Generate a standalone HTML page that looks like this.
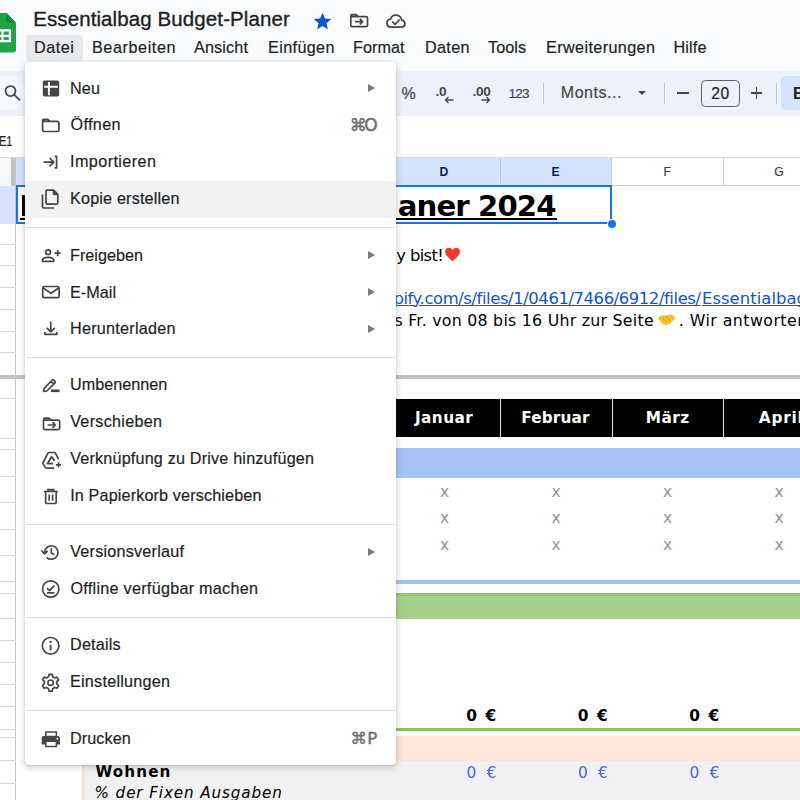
<!DOCTYPE html>
<html lang="de">
<head>
<meta charset="utf-8">
<title>Essentialbag Budget-Planer</title>
<style>
html,body{margin:0;padding:0;}
body{width:800px;height:800px;overflow:hidden;position:relative;background:#fff;font-family:"Liberation Sans",sans-serif;color:#1f1f1f;}
.a{position:absolute;}
.t{position:absolute;white-space:nowrap;line-height:1;color:#1f1f1f;}
.u{-webkit-text-stroke:.2px currentColor;}
.u2{-webkit-text-stroke:.35px currentColor;}
#hdr{left:0;top:0;width:800px;height:157px;background:#f9fbfd;}
#datei-bg{left:25.5px;top:35.25px;width:57px;height:25.5px;background:#e7e9ec;border-radius:3.5px;}
#tb{left:-30px;top:71.250px;width:900px;height:45px;background:#edf2fa;border-radius:22.500px;}
.sep{position:absolute;width:1px;height:21.500px;top:82.500px;background:#c7c7c7;}
#fbar{left:0;top:116.250px;width:800px;height:41px;background:#fff;}
.hl{position:absolute;left:0;width:15.500px;height:1px;background:#d5d8db;}
.ch{position:absolute;top:158px;height:28px;box-sizing:border-box;border-right:1px solid #c8cacc;border-bottom:1px solid #c8cacc;background:#fff;}
.ch.sel{background:#d3e3fd;border-right-color:#b9c9e6;border-bottom-color:#b9c9e6;}
#menu{left:25px;top:62.25px;width:371.25px;height:702.5px;background:#fff;border-radius:4px;box-shadow:0 2px 6px 2px rgba(60,64,67,.15),0 1px 2px rgba(60,64,67,.22);}
.msep{position:absolute;left:26px;width:369px;height:1px;background:#dcdee1;}
.arr{position:absolute;left:368.4px;width:0;height:0;border-left:7.8px solid #797c7f;border-top:4.1px solid transparent;border-bottom:4.1px solid transparent;}
.ic{position:absolute;left:39.500px;width:22px;height:22px;fill:none;stroke:#3c4043;stroke-width:1.7;stroke-linecap:butt;stroke-linejoin:round;}
.xs{position:absolute;width:8px;height:8px;}
</style>
</head>
<body>
<div id="hdr" class="a"></div>
<!-- sheets logo -->
<svg class="a" style="left:-12.800px;top:13.400px" width="29" height="39.500" viewBox="0 0 29 39.500">
  <path d="M3 0 H19.500 L29 9.700 V36.500 a3 3 0 0 1 -3 3 H3 a3 3 0 0 1 -3 -3 V3 a3 3 0 0 1 3 -3z" fill="#1fa34a"/>
  <path d="M19.500 0 L29 9.700 H22 a2.500 2.500 0 0 1 -2.500 -2.500z" fill="#0f8a3c"/>
  <path d="M7 16.300 h17.050 v13.050 h-17.050z M9.200 18.500 v3.200 h5.200 v-3.200z M16.600 18.500 v3.200 h5.200 v-3.200z M9.200 23.900 v3.200 h5.200 v-3.200z M16.600 23.900 v3.200 h5.200 v-3.200z" fill="#fff" fill-rule="evenodd"/>
</svg>
<!-- star, move, cloud -->
<svg class="a" style="left:311.850px;top:10.650px" width="21" height="21" viewBox="0 0 24 24"><path fill="#0b57d0" d="M12 17.270 18.180 21l-1.640-7.030L22 9.240l-7.190-.61L12 2 9.190 8.630 2 9.240l5.460 4.730L5.820 21z"/></svg>
<svg class="a" style="left:0;top:0" width="800" height="62" viewBox="0 0 800 62" fill="none" stroke="#444746" stroke-width="1.700" stroke-linejoin="round"><path d="M352.300 14.600 H356.300 L358.300 16.600 H366 a1.500 1.500 0 0 1 1.500 1.500 V25.200 a1.500 1.500 0 0 1 -1.500 1.500 H352.300 a1.500 1.500 0 0 1 -1.500 -1.500 V16.100 a1.500 1.500 0 0 1 1.500 -1.500z M350.800 16.600 H358.300 M355 21.600 H362.600 M359.800 18.800 L362.600 21.600 L359.800 24.400"/><path d="M391 27.100 a4 4 0 0 1 -.5 -7.970 a5.700 5.700 0 0 1 11.100 .9 a3.550 3.550 0 0 1 .2 7.070z M392.600 22 l2.300 2.300 l4.300 -4.300" stroke-linecap="round"/></svg>
<div id="datei-bg" class="a"></div>
<!-- toolbar -->
<div id="tb" class="a"></div>
<div class="a" style="left:-20px;top:76px;width:46px;height:34px;border-radius:17px;background:#f5f8fd"></div>
<svg class="a" style="left:0;top:80px" width="24" height="24" viewBox="0 0 24 24" fill="none" stroke="#444746" stroke-width="1.750"><circle cx="10.500" cy="11" r="5"/><path d="M14.100 14.600 L20 20.300"/></svg>
<!-- decimal arrows -->
<svg class="a" style="left:443.500px;top:95.800px" width="10" height="8" viewBox="0 0 10 8" fill="none" stroke="#444746" stroke-width="1.300"><path d="M9.500 4 H1.500 M4.500 1 L1.500 4 L4.500 7"/></svg>
<svg class="a" style="left:481px;top:95.800px" width="10" height="8" viewBox="0 0 10 8" fill="none" stroke="#444746" stroke-width="1.300"><path d="M.5 4 H8.500 M5.500 1 L8.500 4 L5.500 7"/></svg>
<div class="sep" style="left:542.500px"></div>
<div class="a" style="left:637.800px;top:90.800px;width:0;height:0;border-top:4.800px solid #444746;border-left:4.500px solid transparent;border-right:4.500px solid transparent"></div>
<div class="sep" style="left:664px"></div>
<div class="a" style="left:677px;top:92.200px;width:11.800px;height:1.700px;background:#444746"></div>
<div class="a" style="left:701.250px;top:80px;width:38.250px;height:26.500px;box-sizing:border-box;border:1px solid #5f6368;border-radius:4.500px"></div>
<div class="a" style="left:750.700px;top:92.200px;width:11.800px;height:1.700px;background:#444746"></div>
<div class="a" style="left:755.750px;top:87.100px;width:1.700px;height:11.800px;background:#444746"></div>
<div class="sep" style="left:776px"></div>
<div class="a" style="left:781.250px;top:76.250px;width:30px;height:33.750px;background:#d3e3fd;border-radius:5px"></div>
<!-- formula bar -->
<div id="fbar" class="a"></div>
<div class="t u" style="left:33.20px;top:9px;font-size:20.5px;letter-spacing:0.100px;-webkit-text-stroke:.35px #1f1f1f;">Essentialbag Budget-Planer</div>
<div class="t u" style="left:34.00px;top:39px;font-size:16.2px;letter-spacing:0.502px;">Datei</div>
<div class="t u" style="left:92.00px;top:39px;font-size:16.2px;letter-spacing:0.578px;">Bearbeiten</div>
<div class="t u" style="left:194.00px;top:39px;font-size:16.2px;letter-spacing:0.152px;">Ansicht</div>
<div class="t u" style="left:268.00px;top:39px;font-size:16.2px;letter-spacing:0.371px;">Einfügen</div>
<div class="t u" style="left:353.00px;top:39px;font-size:16.2px;letter-spacing:0.046px;">Format</div>
<div class="t u" style="left:425.00px;top:39px;font-size:16.2px;letter-spacing:0.327px;">Daten</div>
<div class="t u" style="left:488.00px;top:39px;font-size:16.2px;letter-spacing:0.076px;">Tools</div>
<div class="t u" style="left:546.00px;top:39px;font-size:16.2px;letter-spacing:0.385px;">Erweiterungen</div>
<div class="t u" style="left:673.50px;top:39px;font-size:16.2px;letter-spacing:0.155px;">Hilfe</div>
<div class="t u" style="left:401.50px;top:86px;font-size:16px;letter-spacing:0.000px;color:#444746;">%</div>
<div class="t" style="left:435.50px;top:85px;font-size:13.6px;letter-spacing:-0.277px;font-weight:bold;color:#444746;">.0</div>
<div class="t" style="left:472.50px;top:85px;font-size:13.6px;letter-spacing:-0.268px;font-weight:bold;color:#444746;">.00</div>
<div class="t u" style="left:508.50px;top:87px;font-size:13.6px;letter-spacing:-0.810px;color:#444746;">123</div>
<div class="t u" style="left:560.80px;top:85px;font-size:16px;letter-spacing:0.534px;color:#444746;">Monts...</div>
<div class="t u" style="left:711.30px;top:86px;font-size:15.6px;letter-spacing:0.527px;">20</div>
<div class="t" style="left:793.00px;top:85px;font-size:16.2px;letter-spacing:0.000px;font-weight:bold;">B</div>
<div class="t u" style="left:-0.70px;top:134px;font-size:14px;letter-spacing:-0.038px;transform:scaleX(.78);transform-origin:0 0;">E1</div>

<!-- ================= GRID ================= -->
<div class="a" style="left:0;top:157px;width:800px;height:1px;background:#d9dce0"></div>
<!-- corner -->
<div class="a" style="left:0;top:158px;width:16px;height:27.500px;background:#f6f7f8"></div>
<div class="a" style="left:10.700px;top:158px;width:5.300px;height:27.500px;background:#c1c3c5"></div>
<!-- column headers -->
<div class="ch sel" style="left:16px;width:484.500px"></div>
<div class="ch sel" style="left:389px;width:111.500px"></div>
<div class="ch sel" style="left:500.500px;width:111.500px"></div>
<div class="ch" style="left:612px;width:111.500px"></div>
<div class="ch" style="left:723.500px;width:111.500px"></div>
<!-- row header column -->
<div class="a" style="left:0;top:186px;width:16px;height:614px;background:#fff"></div>
<div class="a" style="left:0;top:186px;width:16px;height:38px;background:#d3e3fd"></div>
<div class="a" style="left:15.300px;top:186px;width:1px;height:614px;background:#c2c4c6"></div>
<div class="hl" style="top:243.60px"></div>
<div class="hl" style="top:265.30px"></div>
<div class="hl" style="top:287.00px"></div>
<div class="hl" style="top:308.70px"></div>
<div class="hl" style="top:330.60px"></div>
<div class="hl" style="top:352.40px"></div>
<div class="hl" style="top:398.25px"></div>
<div class="hl" style="top:437.60px"></div>
<div class="hl" style="top:448.90px"></div>
<div class="hl" style="top:475.60px"></div>
<div class="hl" style="top:501.75px"></div>
<div class="hl" style="top:528.50px"></div>
<div class="hl" style="top:554.80px"></div>
<div class="hl" style="top:581.10px"></div>
<div class="hl" style="top:593.25px"></div>
<div class="hl" style="top:617.70px"></div>
<div class="hl" style="top:639.90px"></div>
<div class="hl" style="top:661.80px"></div>
<div class="hl" style="top:683.80px"></div>
<div class="hl" style="top:705.70px"></div>
<div class="hl" style="top:728.70px"></div>
<div class="hl" style="top:736.60px"></div>
<div class="hl" style="top:760.20px"></div>
<div class="hl" style="top:782.80px"></div>
<!-- row 1 selection -->
<div class="a" style="left:16px;top:185px;width:596px;height:39px;box-sizing:border-box;border:2px solid #1a73e8;background:#fff"></div>
<div class="a" style="left:22px;top:194.500px;width:3.500px;height:21.500px;background:#000"></div>
<div class="a" style="left:20px;top:217.500px;width:536.500px;height:2.200px;background:#000"></div>
<div class="a" style="left:606.500px;top:219px;width:10px;height:10px;border-radius:50%;background:#fff"></div>
<div class="a" style="left:607.500px;top:220px;width:8px;height:8px;border-radius:50%;background:#1a73e8"></div>
<!-- frozen divider -->
<div class="a" style="left:0;top:374.500px;width:800px;height:4px;background:#c3c3c3"></div>
<!-- month header -->
<div class="a" style="left:82px;top:399.400px;width:718px;height:37.500px;background:#000"></div>
<div class="a" style="left:500px;top:399.400px;width:1.200px;height:37.500px;background:#e3e3e3"></div>
<div class="a" style="left:611.500px;top:399.400px;width:1.200px;height:37.500px;background:#e3e3e3"></div>
<div class="a" style="left:723px;top:399.400px;width:1.200px;height:37.500px;background:#e3e3e3"></div>
<!-- blue band -->
<div class="a" style="left:82px;top:448px;width:718px;height:29.500px;background:#a4c2f4"></div>
<!-- thin blue line -->
<div class="a" style="left:82px;top:580.300px;width:718px;height:3.300px;background:#a4c2f4"></div>
<!-- green band -->
<div class="a" style="left:82px;top:593px;width:718px;height:26px;background:#a8d08d"></div>
<div class="a" style="left:82px;top:593px;width:718px;height:3.200px;background:#93c95a"></div>
<!-- green line -->
<div class="a" style="left:82px;top:727.500px;width:718px;height:3.500px;background:#8fc556"></div>
<!-- peach band -->
<div class="a" style="left:82px;top:735.500px;width:718px;height:25px;background:#fce5d9"></div>
<!-- gray row -->
<div class="a" style="left:82px;top:760.500px;width:718px;height:40px;background:#f1f1f1"></div>
<div class="a" style="left:82px;top:735.500px;width:2.500px;height:65px;background:#fce2d4"></div>
<!-- heart -->
<svg class="a" style="left:443.500px;top:246px" width="17" height="17" viewBox="0 0 24 24"><path fill="#f0392b" d="M12 21.500C5 15.500 1.500 12 1.500 7.800 1.500 4.500 4 2.500 6.800 2.500c2 0 3.900 1 5.200 3 1.300-2 3.200-3 5.200-3 2.800 0 5.300 2 5.300 5.300 0 4.200-3.500 7.700-10.500 13.700z"/></svg>
<!-- handshake -->
<svg class="a" style="left:650px;top:308px" width="32" height="24" viewBox="650 308 32 24"><path fill="#f6c230" d="M657.700 318.200 Q660.500 314.300 665.500 315.600 L670.500 314.600 Q674.500 315 675.200 318.400 L671.500 322.300 Q668.500 325.600 665.200 325.100 Q662 324.200 660.300 321.200z"/><path fill="none" stroke="#e2a422" stroke-width="1.100" d="M662 318 L667.500 322.500 M665.500 316.500 L670.500 320.800"/></svg>

<div class="t" style="left:439.50px;top:166px;font-size:12.2px;letter-spacing:0.000px;font-weight:bold;color:#0a2350;">D</div>
<div class="t" style="left:551.50px;top:166px;font-size:12.2px;letter-spacing:0.000px;font-weight:bold;color:#0a2350;">E</div>
<div class="t u" style="left:663.50px;top:166px;font-size:12.2px;letter-spacing:0.000px;color:#3c4043;">F</div>
<div class="t u" style="left:774.30px;top:166px;font-size:12.2px;letter-spacing:0.000px;color:#3c4043;">G</div>
<div class="t" style="left:397.80px;top:192px;font-size:29.2px;letter-spacing:-0.919px;font-family:'DejaVu Sans','Liberation Sans',sans-serif;font-weight:bold;color:#000;">aner 2024</div>
<div class="t" style="left:396.30px;top:248px;font-size:16.4px;letter-spacing:-0.639px;font-family:'DejaVu Sans','Liberation Sans',sans-serif;color:#000;">y bist!</div>
<div class="t" style="left:393.40px;top:291px;font-size:16.4px;letter-spacing:-0.402px;font-family:'DejaVu Sans','Liberation Sans',sans-serif;color:#1155cc;text-decoration:underline;text-decoration-thickness:1.3px;text-underline-offset:1.3px;">pify.com/s/files/1/0461/7466/6912/files/</div>
<div class="t" style="left:702.00px;top:291px;font-size:16.4px;letter-spacing:0.057px;font-family:'DejaVu Sans','Liberation Sans',sans-serif;color:#1155cc;text-decoration:underline;text-decoration-thickness:1.3px;text-underline-offset:1.3px;">Essentialbag</div>
<div class="t" style="left:394.45px;top:313px;font-size:15.8px;letter-spacing:0.249px;font-family:'DejaVu Sans','Liberation Sans',sans-serif;color:#000;">s Fr. von 08 bis 16 Uhr zur Seite</div>
<div class="t" style="left:678.80px;top:313px;font-size:15.8px;letter-spacing:0.448px;font-family:'DejaVu Sans','Liberation Sans',sans-serif;color:#000;">. Wir antworten</div>
<div class="t" style="left:414.90px;top:411px;font-size:15.3px;letter-spacing:0.457px;font-family:'DejaVu Sans','Liberation Sans',sans-serif;font-weight:bold;color:#fff;">Januar</div>
<div class="t" style="left:521.30px;top:411px;font-size:15.3px;letter-spacing:0.132px;font-family:'DejaVu Sans','Liberation Sans',sans-serif;font-weight:bold;color:#fff;">Februar</div>
<div class="t" style="left:645.80px;top:411px;font-size:15.3px;letter-spacing:0.437px;font-family:'DejaVu Sans','Liberation Sans',sans-serif;font-weight:bold;color:#fff;">März</div>
<div class="t" style="left:758.80px;top:411px;font-size:15.3px;letter-spacing:0.789px;font-family:'DejaVu Sans','Liberation Sans',sans-serif;font-weight:bold;color:#fff;">April</div>
<div class="t" style="left:440.00px;top:485px;font-size:15.5px;letter-spacing:0.000px;font-family:'DejaVu Sans','Liberation Sans',sans-serif;color:#949494;">x</div>
<div class="t" style="left:440.00px;top:511px;font-size:15.5px;letter-spacing:0.000px;font-family:'DejaVu Sans','Liberation Sans',sans-serif;color:#949494;">x</div>
<div class="t" style="left:440.00px;top:538px;font-size:15.5px;letter-spacing:0.000px;font-family:'DejaVu Sans','Liberation Sans',sans-serif;color:#949494;">x</div>
<div class="t" style="left:551.60px;top:485px;font-size:15.5px;letter-spacing:0.000px;font-family:'DejaVu Sans','Liberation Sans',sans-serif;color:#949494;">x</div>
<div class="t" style="left:551.60px;top:511px;font-size:15.5px;letter-spacing:0.000px;font-family:'DejaVu Sans','Liberation Sans',sans-serif;color:#949494;">x</div>
<div class="t" style="left:551.60px;top:538px;font-size:15.5px;letter-spacing:0.000px;font-family:'DejaVu Sans','Liberation Sans',sans-serif;color:#949494;">x</div>
<div class="t" style="left:663.10px;top:485px;font-size:15.5px;letter-spacing:0.000px;font-family:'DejaVu Sans','Liberation Sans',sans-serif;color:#949494;">x</div>
<div class="t" style="left:663.10px;top:511px;font-size:15.5px;letter-spacing:0.000px;font-family:'DejaVu Sans','Liberation Sans',sans-serif;color:#949494;">x</div>
<div class="t" style="left:663.10px;top:538px;font-size:15.5px;letter-spacing:0.000px;font-family:'DejaVu Sans','Liberation Sans',sans-serif;color:#949494;">x</div>
<div class="t" style="left:774.60px;top:485px;font-size:15.5px;letter-spacing:0.000px;font-family:'DejaVu Sans','Liberation Sans',sans-serif;color:#949494;">x</div>
<div class="t" style="left:774.60px;top:511px;font-size:15.5px;letter-spacing:0.000px;font-family:'DejaVu Sans','Liberation Sans',sans-serif;color:#949494;">x</div>
<div class="t" style="left:774.60px;top:538px;font-size:15.5px;letter-spacing:0.000px;font-family:'DejaVu Sans','Liberation Sans',sans-serif;color:#949494;">x</div>
<div class="t" style="left:466.30px;top:709px;font-size:15.4px;letter-spacing:1.617px;font-family:'DejaVu Sans','Liberation Sans',sans-serif;font-weight:bold;color:#000;">0 €</div>
<div class="t" style="left:466.50px;top:766px;font-size:15.4px;letter-spacing:2.708px;font-family:'DejaVu Sans','Liberation Sans',sans-serif;color:#4a67d6;">0 €</div>
<div class="t" style="left:577.70px;top:709px;font-size:15.4px;letter-spacing:1.617px;font-family:'DejaVu Sans','Liberation Sans',sans-serif;font-weight:bold;color:#000;">0 €</div>
<div class="t" style="left:577.90px;top:766px;font-size:15.4px;letter-spacing:2.708px;font-family:'DejaVu Sans','Liberation Sans',sans-serif;color:#4a67d6;">0 €</div>
<div class="t" style="left:689.30px;top:709px;font-size:15.4px;letter-spacing:1.617px;font-family:'DejaVu Sans','Liberation Sans',sans-serif;font-weight:bold;color:#000;">0 €</div>
<div class="t" style="left:689.50px;top:766px;font-size:15.4px;letter-spacing:2.708px;font-family:'DejaVu Sans','Liberation Sans',sans-serif;color:#4a67d6;">0 €</div>
<div class="t" style="left:95.60px;top:765px;font-size:15.2px;letter-spacing:1.066px;font-family:'DejaVu Sans','Liberation Sans',sans-serif;font-weight:bold;color:#000;">Wohnen</div>
<div class="t" style="left:94.60px;top:786px;font-size:15.2px;letter-spacing:0.878px;font-family:'DejaVu Sans','Liberation Sans',sans-serif;font-style:italic;color:#000;">% der Fixen Ausgaben</div>

<!-- ================= MENU ================= -->
<div id="menu" class="a"></div>
<div class="a" style="left:25px;top:180.500px;width:371px;height:37px;background:#f0f2f3"></div>
<div class="msep" style="top:226.9px"></div>
<div class="msep" style="top:357px"></div>
<div class="msep" style="top:523.7px"></div>
<div class="msep" style="top:616.75px"></div>
<div class="msep" style="top:710.1px"></div>
<div class="arr" style="top:83.90px"></div>
<div class="arr" style="top:250.90px"></div>
<div class="arr" style="top:287.80px"></div>
<div class="arr" style="top:324.70px"></div>
<div class="arr" style="top:547.80px"></div>
<svg class="a" style="left:0;top:0" width="800" height="800" viewBox="0 0 800 800" fill="none" stroke="#444746" stroke-width="1.700" stroke-linejoin="round"><rect x="42.8" y="80.6" width="16.4" height="15.9" rx="1.8" fill="#444746" stroke="none"/><path d="M48.9 82 V95.2 M44.2 86.7 H57.8" stroke="#fff" stroke-width="1.9"/>
<path d="M44.1 119.3 H47.8 L49.8 121.3 H57.4 a1.5 1.5 0 0 1 1.5 1.5 V130 a1.5 1.5 0 0 1 -1.5 1.5 H44.1 a1.5 1.5 0 0 1 -1.5 -1.5 V120.8 a1.5 1.5 0 0 1 1.5 -1.5z M42.6 121.3 H50"/>
<path d="M43.6 162.2 H53.5 M49.6 158 L53.8 162.2 L49.6 166.4 M54.6 156.4 H56.6 V167.9 H54.6"/>
<path d="M47.5 190.1 H53.6 L57.8 194.3 V202.7 a1.5 1.5 0 0 1 -1.5 1.5 H47.5 a1.5 1.5 0 0 1 -1.5 -1.5 V191.6 a1.5 1.5 0 0 1 1.5 -1.5z M42.5 194.6 V206.5 a1.5 1.5 0 0 0 1.5 1.5 H53.9"/><path d="M53.2 190.3 V194.7 H57.6z" fill="#444746" stroke-width="1"/>
<circle cx="48.1" cy="252.2" r="2.4"/><path d="M42.4 261.3 V260.4 C42.4 258 45.5 257.3 48.1 257.3 S53.8 258 53.8 260.4 V261.3z M57.7 250 V256.2 M54.6 253.1 H60.8"/>
<rect x="42.7" y="286.5" width="16.4" height="11.2" rx="1.5"/><path d="M43.2 288 L50.9 293.2 L58.6 288"/>
<path d="M50.7 321.4 V331.6 M46.7 327.8 L50.7 331.8 L54.7 327.8 M44.9 331.9 V334.3 H56.9 V331.9"/>
<path d="M43.5 391.3 L44.1 388.3 L52.3 380.1 a1 1 0 0 1 1.4 0 L55 381.4 a1 1 0 0 1 0 1.400 L46.800 391 z M51 381.400 L53.700 384.100"/><path d="M50.9 390.800 H59.600" stroke-width="2.600"/>
<path d="M45 418.100 H49 L51 420.100 H58.200 a1.500 1.500 0 0 1 1.500 1.500 V428.100 a1.500 1.500 0 0 1 -1.500 1.500 H45 a1.500 1.500 0 0 1 -1.500 -1.500 V419.600 a1.500 1.500 0 0 1 1.500 -1.500z M43.500 420.100 H51 M47.600 425 H55.200 M52.500 422.200 L55.300 425 L52.500 427.800"/>
<path d="M54.200 468.100 H46.600 a1.400 1.400 0 0 1 -1.200 -.7 L43.100 463.900 a1.400 1.400 0 0 1 0 -1.400 L48 453.200 a1.400 1.400 0 0 1 1.200 -.7 H54.200 a1.400 1.400 0 0 1 1.200 .7 L58.600 459.200 M54.600 461 L51.500 456.700 L47.400 463.700 H53 M58.500 462.200 V467.500 M55.900 464.850 H61.100"/>
<path d="M43.900 491.500 H57.900 M47.900 491 V489.700 H53.900 V491 M45.600 492 V502 a1.500 1.500 0 0 0 1.500 1.500 H54.700 a1.500 1.500 0 0 0 1.500 -1.500 V492 M49.200 494.500 V500.700 M52.600 494.500 V500.700"/>
<path d="M44.600 552.500 A6.700 6.700 0 1 1 46.600 557.300 M41.400 550.500 L44.400 553.900 L47.700 551 M51.300 548.200 V552.800 L54.400 554.800"/>
<circle cx="50.700" cy="589" r="8.200"/><path d="M47 588.200 L49.600 590.700 L54.400 585.700 M47 592.900 H54.400"/>
<circle cx="50.600" cy="645.800" r="8.300"/><path d="M50.600 644.800 V650.300" stroke-width="1.900"/><circle cx="50.600" cy="641.900" r="1.100" fill="#444746" stroke="none"/>
<path d="M52.65 676.74 L52.22 674.36 L48.98 674.36 L48.55 676.74 L46.47 677.95 L44.18 677.12 L42.56 679.93 L44.42 681.50 L44.42 683.90 L42.56 685.47 L44.18 688.28 L46.47 687.45 L48.55 688.66 L48.98 691.04 L52.22 691.04 L52.65 688.66 L54.73 687.45 L57.02 688.28 L58.64 685.47 L56.78 683.90 L56.78 681.50 L58.64 679.93 L57.02 677.12 L54.73 677.95z"/><circle cx="50.600" cy="682.700" r="2.700"/>
<path d="M43.700 736 H58 a2 2 0 0 1 2 2 V744.500 H41.700 V738 a2 2 0 0 1 2 -2z" fill="#444746" stroke="none"/><rect x="45.800" y="732" width="10.600" height="4.500" fill="#fff" stroke-width="1.500"/><rect x="45.800" y="741.300" width="10.600" height="5.200" fill="#fff" stroke-width="1.500"/><circle cx="57.300" cy="738.700" r=".9" fill="#fff" stroke="none"/></svg>
<div class="t u" style="left:70.00px;top:80px;font-size:16.2px;letter-spacing:0.154px;">Neu</div>
<div class="t u" style="left:70.50px;top:116px;font-size:16.2px;letter-spacing:0.340px;">Öffnen</div>
<div class="t u" style="left:70.00px;top:153px;font-size:16.2px;letter-spacing:0.413px;">Importieren</div>
<div class="t u" style="left:70.00px;top:190px;font-size:16.2px;letter-spacing:0.173px;">Kopie erstellen</div>
<div class="t u" style="left:70.00px;top:247px;font-size:16.2px;letter-spacing:0.014px;">Freigeben</div>
<div class="t u" style="left:70.00px;top:284px;font-size:16.2px;letter-spacing:0.046px;">E-Mail</div>
<div class="t u" style="left:70.00px;top:320px;font-size:16.2px;letter-spacing:0.243px;">Herunterladen</div>
<div class="t u" style="left:70.00px;top:376px;font-size:16.2px;letter-spacing:0.012px;">Umbenennen</div>
<div class="t u" style="left:70.20px;top:413px;font-size:16.2px;letter-spacing:0.271px;">Verschieben</div>
<div class="t u" style="left:70.20px;top:450px;font-size:16.2px;letter-spacing:0.178px;">Verknüpfung zu Drive hinzufügen</div>
<div class="t u" style="left:70.20px;top:487px;font-size:16.2px;letter-spacing:0.135px;">In Papierkorb verschieben</div>
<div class="t u" style="left:70.20px;top:543px;font-size:16.2px;letter-spacing:0.223px;">Versionsverlauf</div>
<div class="t u" style="left:70.50px;top:580px;font-size:16.2px;letter-spacing:0.263px;">Offline verfügbar machen</div>
<div class="t u" style="left:70.00px;top:636px;font-size:16.2px;letter-spacing:0.186px;">Details</div>
<div class="t u" style="left:70.00px;top:673px;font-size:16.2px;letter-spacing:0.234px;">Einstellungen</div>
<div class="t u" style="left:70.00px;top:730px;font-size:16.2px;letter-spacing:0.088px;">Drucken</div>
<div class="t" style="left:349.80px;top:117px;font-size:17px;letter-spacing:-2.600px;font-family:'DejaVu Sans','Liberation Sans',sans-serif;color:#6c7075;-webkit-text-stroke:.45px #6c7075;">⌘O</div>
<div class="t" style="left:350.40px;top:731px;font-size:16.6px;letter-spacing:0.206px;font-family:'DejaVu Sans','Liberation Sans',sans-serif;color:#6c7075;-webkit-text-stroke:.45px #6c7075;">⌘P</div>
</body>
</html>
